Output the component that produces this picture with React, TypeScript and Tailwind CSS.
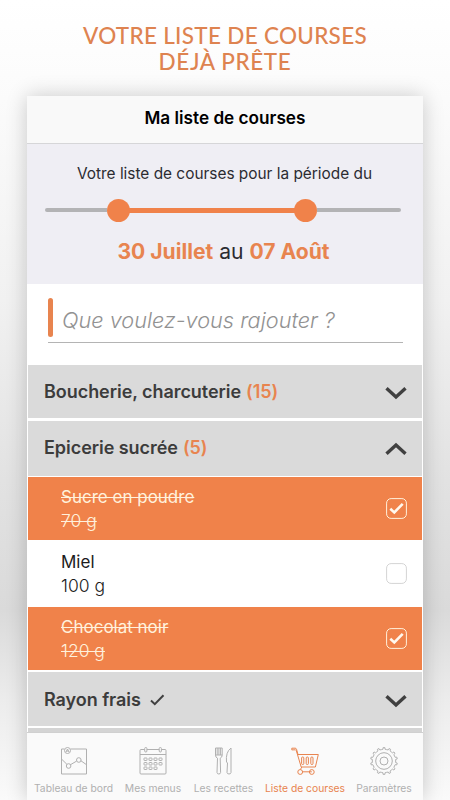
import type { ReactNode } from 'react';

function Chevron({ up = false }: { up?: boolean }) {
    return (
        <svg width="22" height="14" viewBox="0 0 22 14" fill="none" stroke="#404040" strokeWidth="3.4">
            <path d={up ? 'M1.5 11.7 11 3l9.5 8.7' : 'M1.5 2.3 11 11l9.5-8.7'} />
        </svg>
    );
}

function Checkbox({ checked }: { checked: boolean }) {
    return (
        <svg width="21" height="21" viewBox="0 0 21 21" fill="none">
            <rect x="0.6" y="0.6" width="19.8" height="19.8" rx="4.5" stroke={checked ? '#fff1dc' : '#d4d4d4'} />
            {checked && <path d="m4.3 10.8 4 3.6 8.4-8.6" stroke="#fff8ee" strokeWidth="2.6" />}
        </svg>
    );
}

function Section({ className, title, count, done, open }: {
    className: string;
    title: string;
    count?: number;
    done?: boolean;
    open?: boolean;
}) {
    return (
        <div className={`flex items-center justify-between bg-[#dadada] pl-[16px] pr-[15px] ${className}`}>
            <div className="flex items-center text-[18px] font-semibold tracking-[-0.05px] text-[#3c3c3c]">
                <span>{title}</span>
                {count && <span className="ml-[5px] text-[#e8844f]">({count})</span>}
                {done && (
                    <svg className="ml-[9px] mt-[2px]" width="15" height="12" viewBox="0 0 15 12" fill="none" stroke="#404040" strokeWidth="2">
                        <path d="m1 6.5 3.8 3.7L13.5 1.3" />
                    </svg>
                )}
            </div>
            <div className="mt-[3px]"><Chevron up={open} /></div>
        </div>
    );
}

function Item({ className, name, qty, checked = false }: {
    className: string;
    name: string;
    qty: string;
    checked?: boolean;
}) {
    return (
        <div className={`flex items-center justify-between pl-[33px] pr-[15px] ${className}`}>
            <div className={`text-[17px] leading-[23px] ${checked ? 'text-[#fff1dc] line-through decoration-1' : 'text-[#1c1c1c]'}`}>
                <div>{name}</div>
                <div className="text-[17.5px] font-light">{qty}</div>
            </div>
            <Checkbox checked={checked} />
        </div>
    );
}

function Tab({ className, label, active, children }: {
    className: string;
    label: string;
    active?: boolean;
    children: ReactNode;
}) {
    return (
        <div className={`flex shrink-0 flex-col items-center ${active ? 'text-[#e8844f]' : 'text-[#b0b0b0]'} ${className}`}>
            <svg className="mt-[14px]" width="28" height="28" viewBox="0 0 28 28" fill="none" stroke="currentColor" strokeWidth="1">
                {children}
            </svg>
            <span className="mt-[6px] whitespace-nowrap text-[10.3px] leading-[14px]">{label}</span>
        </div>
    );
}

// Gear outline: narrow teeth around the rim
const TEETH = 14;
const gear = Array.from({ length: TEETH }, (_, i) => {
    const p = (r: number, o: number) => {
        const a = ((i + o) / TEETH) * Math.PI * 2 - Math.PI / 2;
        return `${(14 + r * Math.cos(a)).toFixed(2)} ${(14 + r * Math.sin(a)).toFixed(2)}`;
    };
    return `${i ? 'L' : 'M'}${p(11.8, -0.2)}L${p(13.4, -0.15)}L${p(13.4, 0.15)}L${p(11.8, 0.2)}Q${p(11.6, 0.5)} ${p(11.8, 0.8)}`;
}).join('') + 'Z';

export default function App() {
    return (
        <div className="h-[800px] w-[450px] overflow-hidden bg-[linear-gradient(to_bottom,#fff_0px,#fbfbfb_100px,#f1f1f1_300px,#e2e2e2_480px,#dadada_610px,#ececec_700px,#fafafa_800px)] font-['Inter',sans-serif]">
            <h1 className="h-[96px] pt-[23px] text-center font-['Lato',sans-serif] text-[22.5px] font-medium leading-[26px] text-[#de8350]">
                <span className="tracking-[0.3px]">VOTRE LISTE DE COURSES</span>
                <br />
                <span className="tracking-[0.6px]">DÉJÀ PRÊTE</span>
            </h1>

            <div className="mx-[27px] flex h-[704px] flex-col bg-white shadow-[0_0_20px_rgba(0,0,0,0.2)]">
                <div className="flex h-[48px] shrink-0 items-center justify-center border-b border-[#d6d6d8] bg-[#f9f9f9] pb-[3px] text-[17.2px] font-semibold text-black">
                    Ma liste de courses
                </div>

                {/* Period */}
                <div className="flex h-[140px] shrink-0 flex-col items-center bg-[#efeef4]">
                    <p className="mt-[18px] pr-[1px] text-[15.4px] leading-[24px] text-[#2b2b31]">Votre liste de courses pour la période du</p>
                    <div className="mr-[4px] mt-[12px] flex h-[24px] w-[356px] items-center">
                        <div className="h-[4px] w-[62px] rounded-l-full bg-[#b3b3b5]" />
                        <div className="-mr-px size-[23px] rounded-full bg-[#f0824a]" />
                        <div className="h-[5px] w-[166px] bg-[#f0824a]" />
                        <div className="-ml-px size-[23px] rounded-full bg-[#f0824a]" />
                        <div className="h-[4px] flex-1 rounded-r-full bg-[#b3b3b5]" />
                    </div>
                    <p className="mt-[15px] pr-[3px] text-[21.1px] leading-[30px] text-[#2b2b31]">
                        <b className="font-bold text-[#e8844f]">30 Juillet</b> au <b className="font-bold text-[#e8844f]">07 Août</b>
                    </p>
                </div>

                <div className="h-[81px] shrink-0 pl-[21px] pr-[20px] pt-[14px]">
                    <div className="flex h-[45px] items-start border-b border-[#b4b4b4]">
                        <div className="h-[39px] w-[5px] rounded-full bg-[#e8844f]" />
                        <span className="ml-[9px] mt-[8px] text-[21.7px] font-light italic leading-[28px] text-[#929292]">Que voulez-vous rajouter ?</span>
                    </div>
                </div>

                <div className="flex h-[367px] shrink-0 flex-col overflow-hidden px-px">
                    <Section className="h-[53px] shrink-0" title="Boucherie, charcuterie" count={15} />
                    <Section className="mt-[3px] h-[55px] shrink-0 pb-[3px]" title="Epicerie sucrée" count={5} open />
                    <Item className="mt-px h-[63px] shrink-0 bg-[#f0824a]" name="Sucre en poudre" qty="70 g" checked />
                    <Item className="h-[67px] shrink-0" name="Miel" qty="100 g" />
                    <Item className="h-[63px] shrink-0 bg-[#f0824a]" name="Chocolat noir" qty="120 g" checked />
                    <Section className="mt-[2px] h-[54px] shrink-0" title="Rayon frais" done />
                    <div className="mt-[2px] h-[4px] shrink-0 bg-[#d4d4d4]" />
                </div>

                <div className="flex h-[68px] shrink-0 border-t border-[#d0d0d0] bg-[#fafafa]">
                    <Tab className="w-[93px]" label="Tableau de bord">
                        <path d="M10.5 2H26.5V27H1.5V2h3M1.5 12l5.4 5.3M10.3 17.8l6.3-3.7M20.8 13.7l5.7 4" />
                        <circle cx="7.5" cy="3.5" r="3" />
                        <path d="m6 5 1.5-3L9 5M6.5 4h2" />
                        <circle cx="8.6" cy="19" r="2.3" />
                        <circle cx="18.8" cy="13" r="2.3" />
                    </Tab>
                    <Tab className="w-[66px]" label="Mes menus">
                        <rect x="1" y="2.5" width="26" height="24.5" rx="1" />
                        <path d="M1 7.5h26" />
                        <rect x="5.7" y="0.5" width="2.2" height="4.5" rx="1" fill="#fafafa" />
                        <rect x="20.2" y="0.5" width="2.2" height="4.5" rx="1" fill="#fafafa" />
                        {[11, 15.5, 20].map((y) => [5, 10, 15, 20].map((x) => (
                            (y < 20 || x < 20) && <rect key={`${x}-${y}`} x={x} y={y} width="3" height="2.5" rx="0.4" />
                        )))}
                    </Tab>
                    <Tab className="w-[75px]" label="Les recettes">
                        <path d="M5.5 1v7q0 2.5 2 3.2L7 25.5q.2 1.5 1.8 1.5t1.8-1.5L10.2 11.2q2-.7 2-3.2V1ZM7.2 1v7M8.9 1v7M10.6 1v7M5.5 8h6.7" />
                        <path d="M21 1q-5.5 4-4.5 14l1 1-.5 9.5q.2 1.5 2 1.5t2-1.5Z" />
                    </Tab>
                    <Tab className="w-[88px]" label="Liste de courses" active>
                        <path d="M.8 1.2h3.4q1 0 1.3 1L7 7.5H27.3L24.4 20H10.2L5.3 3.6 4.5 2.8.8 2.9ZM7 7.5h-.6M10.8 20 9.4 22.5M11.8 24.8h9" />
                        <rect x="10.6" y="10" width="2.2" height="7.5" rx="1" />
                        <rect x="15.2" y="10" width="2.2" height="7.5" rx="1" />
                        <rect x="19.8" y="10" width="2.2" height="7.5" rx="1" />
                        <circle cx="9.2" cy="25" r="2.4" />
                        <circle cx="20.8" cy="25" r="2.4" />
                    </Tab>
                    <Tab className="w-[70px]" label="Paramètres">
                        <path d={gear} />
                        <circle cx="14" cy="14" r="8.3" />
                        <circle cx="14" cy="14" r="4" />
                    </Tab>
                </div>
            </div>
        </div>
    );
}
